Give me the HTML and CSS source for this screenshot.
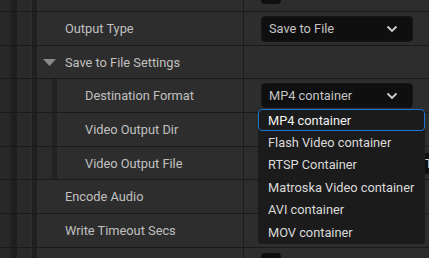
FILE: index.html
```html
<!DOCTYPE html>
<html>
<head>
<meta charset="utf-8">
<link rel="stylesheet" href="styles.css">
</head>
<body>
<div class="panel">
  <div class="row row-partial-top">
    <div class="gutter"></div>
    <div class="name"></div>
    <div class="value value-top"><span class="checkbox"></span></div>
  </div>
  <div class="row">
    <div class="gutter"></div>
    <div class="name"><span class="label">Output Type</span></div>
    <div class="value">
      <div class="combo"><span class="combo-text">Save to File</span>
        <svg class="chev" width="12" height="8" viewBox="0 0 12 8"><polyline points="1.5,1.5 6,6 10.5,1.5" fill="none" stroke="#d0d0d0" stroke-width="1.8"/></svg>
      </div>
    </div>
  </div>
  <div class="row">
    <div class="gutter"></div>
    <div class="name group-name">
      <svg class="tri" width="13" height="7" viewBox="0 0 13 7"><polygon points="0,0 13,0 6.5,7" fill="#8a8a8a"/></svg>
      <span class="label">Save to File Settings</span>
    </div>
    <div class="value"></div>
  </div>
  <div class="row">
    <div class="gutter"></div>
    <div class="name"><div class="indent"></div><span class="label">Destination Format</span></div>
    <div class="value">
      <div class="combo combo-2"><span class="combo-text">MP4 container</span>
        <svg class="chev" width="12" height="8" viewBox="0 0 12 8"><polyline points="1.5,1.5 6,6 10.5,1.5" fill="none" stroke="#d0d0d0" stroke-width="1.8"/></svg>
      </div>
    </div>
  </div>
  <div class="row">
    <div class="gutter"></div>
    <div class="name"><div class="indent"></div><span class="label">Video Output Dir</span></div>
    <div class="value"></div>
  </div>
  <div class="row">
    <div class="gutter"></div>
    <div class="name"><div class="indent"></div><span class="label">Video Output File</span></div>
    <div class="value"><div class="text-input">T</div></div>
  </div>
  <div class="row">
    <div class="gutter"></div>
    <div class="name"><span class="label">Encode Audio</span></div>
    <div class="value"></div>
  </div>
  <div class="row">
    <div class="gutter"></div>
    <div class="name"><span class="label">Write Timeout Secs</span></div>
    <div class="value"></div>
  </div>
  <div class="row">
    <div class="gutter"></div>
    <div class="name"></div>
    <div class="value value-bottom"><span class="checkbox"></span></div>
  </div>

  <div class="menu">
    <div class="item selected">MP4 container</div>
    <div class="item">Flash Video container</div>
    <div class="item">RTSP Container</div>
    <div class="item">Matroska Video container</div>
    <div class="item">AVI container</div>
    <div class="item">MOV container</div>
  </div>
</div>
</body>
</html>
```
FILE: styles.css
```css
* { box-sizing: border-box; }
html, body {
  margin: 0;
  padding: 0;
  background: #1c1c1c;
  overflow: hidden;
}
.panel {
  position: relative;
  width: 429px;
  height: 258px;
  overflow: hidden;
  font-family: Roboto, "Liberation Sans", sans-serif;
  font-size: 12.8px;
  color: #c0c0c0;
}
.row {
  display: flex;
  height: 33.7px;
  border-top: 1px solid #1a1a1a;
  background: #2d2d2d;
}
.row-partial-top {
  height: 11px;
  border-top: none;
}
.gutter {
  width: 37px;
  flex: none;
  background: linear-gradient(to right,
    #282828 0, #282828 10px,
    #232323 10px, #232323 12px,
    #1e1e1e 12px, #1e1e1e 17px,
    #292929 17px, #292929 30px,
    #2e2e2e 30px, #2e2e2e 32px,
    #1f1f1f 32px, #1f1f1f 37px);
}
.name {
  width: 207px;
  flex: none;
  display: flex;
  align-items: center;
  padding-left: 28px;
  border-right: 1px solid #1c1c1c;
}
.name .indent {
  width: 20px;
  height: 100%;
  margin-left: -28px;
  margin-right: 28px;
  background: #2b2b2b;
  border-right: 5px solid #222222;
}
.group-name {
  padding-left: 6px;
}
.tri {
  margin-right: 9px;
  margin-top: 1px;
}
.label {
  white-space: nowrap;
}
.value {
  flex: 1;
  display: flex;
  align-items: center;
  padding-left: 17px;
}
.value-top {
  align-items: flex-end;
  padding-bottom: 7px;
}
.value-bottom {
  align-items: flex-start;
  padding-top: 5px;
}
.checkbox {
  width: 20px;
  height: 20px;
  background: #0f0f0f;
  border-radius: 4px;
  display: block;
  flex: none;
}
.combo {
  width: 152px;
  height: 26px;
  background: #0f0f0f;
  border: 1px solid #161616;
  border-radius: 4px;
  display: flex;
  align-items: center;
  justify-content: space-between;
  padding: 0 14px 0 7px;
  color: #c4c4c4;
  margin-top: 1px;
}
.combo-2 {
  height: 25px;
  margin-top: 0;
}
.combo-text { white-space: nowrap; }
.chev { display: block; }
.text-input {
  width: 200px;
  height: 21px;
  background: #0f0f0f;
  border-radius: 4px;
  padding-left: 164px;
  display: flex;
  align-items: center;
  color: #d0d0d0;
  margin-top: 1px;
}
.menu {
  position: absolute;
  left: 258px;
  top: 109px;
  width: 167px;
  height: 135px;
  background: #1b1b1b;
  border-radius: 4px;
}
.item {
  height: 22.4px;
  display: flex;
  align-items: center;
  padding-left: 9px;
  color: #dadada;
  white-space: nowrap;
  border: 1px solid transparent;
  border-radius: 4px;
}
.item.selected {
  border-color: #1f73d4;
  color: #f2f2f2;
}
```
